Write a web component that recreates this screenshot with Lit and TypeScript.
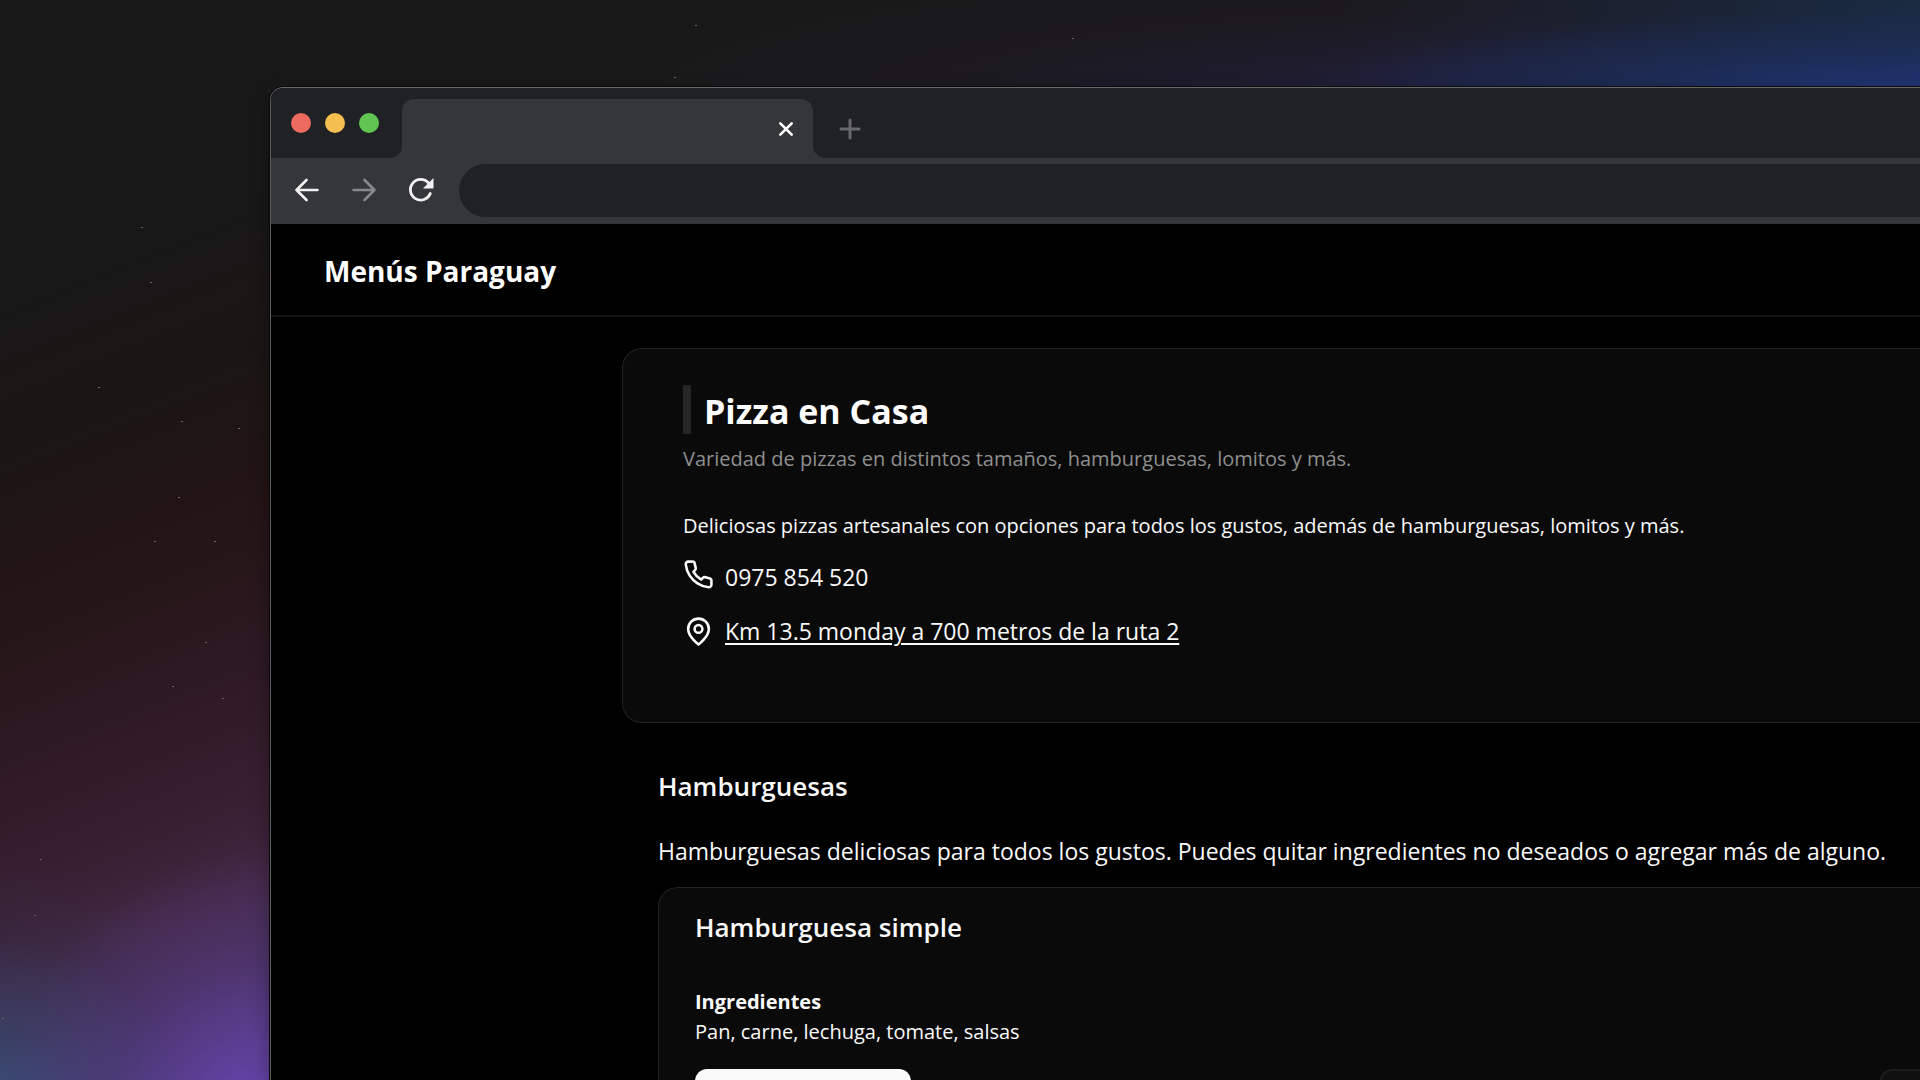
import { LitElement, html, css, svg } from "lit";
import { customElement } from "lit/decorators.js";

const STARS: [number, number][] = [
  [141, 227], [150, 282], [98, 387], [181, 421], [238, 428], [178, 497], [154, 541],
  [214, 541], [205, 642], [172, 686], [222, 698], [40, 859], [34, 915], [2, 1018],
  [695, 25], [1072, 38], [674, 77],
];

@customElement("browser-bar")
export class BrowserBar extends LitElement {
  static styles = css`
    :host { display: block; }
    button { display: grid; place-items: center; border: 0; padding: 0; background: none; color: inherit; }
    svg { display: block; fill: none; stroke: currentColor; }
    .strip { display: flex; align-items: flex-end; height: 70px; background: #202124; }
    .lights { display: flex; align-items: center; gap: 14px; height: 70px; padding: 0 23px 0 20px; }
    .light { width: 20px; height: 20px; border-radius: 50%; }
    .red { background: #ed6a5e; }
    .yellow { background: #f4bf4f; }
    .green { background: #61c554; }
    .tab {
      position: relative; display: flex; align-items: center; justify-content: flex-end;
      flex: 0 0 411px; box-sizing: border-box; height: 59px; padding-right: 15px;
      border-radius: 12px 12px 0 0; background: #35363a; color: #fff;
    }
    .tab::before, .tab::after { content: ""; position: absolute; bottom: 0; width: 12px; height: 12px; }
    .tab::before { right: 100%; background: radial-gradient(circle at 0 0, transparent 12px, #35363a 12px); }
    .tab::after { left: 100%; background: radial-gradient(circle at 100% 0, transparent 12px, #35363a 12px); }
    .close { width: 24px; height: 24px; }
    .new { width: 40px; height: 59px; margin-left: 17px; color: #68696c; }
    .tools { display: flex; align-items: center; height: 66px; box-sizing: border-box; padding: 0 0 2px 20px; background: #35363a; color: #f1f1f1; }
    .nav { display: flex; gap: 25px; padding-right: 22px; }
    .nav button { width: 32px; height: 32px; }
    .forward { color: #87888b; }
    .address {
      flex: 1; min-width: 0; height: 53px; box-sizing: border-box; padding: 0 28px; border: 0;
      border-radius: 27px 0 0 27px; background: #202124; color: #fff; font: 20px "Open Sans", sans-serif;
    }
  `;

  render() {
    return html`
      <div class="strip">
        <div class="lights">
          <span class="light red"></span><span class="light yellow"></span><span class="light green"></span>
        </div>
        <div class="tab">
          <button class="close" aria-label="Cerrar">
            <svg width="16" height="16" viewBox="0 0 16 16" stroke-width="2.6" stroke-linecap="round"><path d="M2.300 2.300l11.400 11.400M13.700 2.300L2.300 13.700" /></svg>
          </button>
        </div>
        <button class="new" aria-label="Nueva">
          <svg width="22" height="22" viewBox="0 0 22 22" stroke-width="3" stroke-linecap="round"><path d="M11 2v18M2 11h18" /></svg>
        </button>
      </div>
      <div class="tools">
        <div class="nav">
          <button aria-label="Atrás">
            <svg width="24" height="24" viewBox="0 0 24 24" stroke-width="2.600" stroke-linecap="round" stroke-linejoin="round"><path d="M22.500 12H1.500M11.500 2L1.500 12L11.500 22" /></svg>
          </button>
          <button class="forward" aria-label="Adelante">
            <svg width="24" height="24" viewBox="0 0 24 24" stroke-width="2.600" stroke-linecap="round" stroke-linejoin="round"><path d="M1.500 12H22.500M12.500 2L22.500 12L12.500 22" /></svg>
          </button>
          <button aria-label="Recargar">
            <svg width="26" height="26" viewBox="0 0 26 26" stroke-width="2.800" stroke-linecap="round">
              <path d="M22.300 16.500A10.300 10.300 0 1 1 20.500 6" /><path d="M25.500 1v10.500H15z" fill="currentColor" stroke="none" />
            </svg>
          </button>
        </div>
        <input class="address" aria-label="Dirección" />
      </div>
    `;
  }
}

@customElement("app-root")
export class AppRoot extends LitElement {
  static styles = css`
    :host {
      display: block; position: relative; box-sizing: border-box; height: 100vh; overflow: hidden;
      padding: 87px 0 0 270px; color: #fafafa; font-family: "Open Sans", "Noto Sans", sans-serif;
      background:
        radial-gradient(ellipse 270px 290px at 265px 1140px, #6c48b8 0%, #6444aae0 25%, #573a8a80 60%, transparent 100%),
        radial-gradient(ellipse 300px 300px at -20px 1160px, #385888 0%, #34487099 45%, #30305040 75%, transparent 100%),
        radial-gradient(ellipse 620px 80px at 1920px 90px, #1f3474 0%, #1e306699 45%, transparent 100%),
        radial-gradient(ellipse 640px 300px at 1980px 0px, #1a2d46 0%, #1a284099 50%, transparent 100%),
        radial-gradient(ellipse 900px 140px at 1500px 100px, #211f3c 0%, #1f1a2880 60%, transparent 100%),
        linear-gradient(158deg, #191919 0%, #181818 24%, #1b1615 38%, #221414 48%, #27161a 56%, #311b28 68%, #3a2135 77%, #432944 83%, #463052 92%) 0 0 / 280px 100% no-repeat,
        #191919;
    }
    .stars { position: absolute; inset: 0; width: 100%; height: 100%; fill: #6a6465; }
    .window {
      position: relative; display: flex; flex-direction: column; box-sizing: border-box; height: 100%;
      border: 1px solid #5b5c5e; border-width: 1px 0 0 1px; border-top-color: #68696b; border-radius: 13px 0 0 0; overflow: hidden; background: #000;
      box-shadow: 0 0 0 1px #0a0a0a, 0 8px 20px #00000059;
    }
    .site { flex: 1; min-height: 0; overflow: hidden; }
    header { display: flex; align-items: center; box-sizing: border-box; height: 93px; padding: 3px 53px 0; border-bottom: 2px solid #141414; }
    h1, h2, h3, h4, p { margin: 0; }
    .brand { font-size: 28px; line-height: 40px; font-weight: 700; color: #fff; text-decoration: none; }
    main { padding: 31px 0 0 351px; }
    .place {
      box-sizing: border-box; height: 375px; padding: 36px 60px; border: 1px solid #222; border-right: 0;
      border-radius: 20px 0 0 20px; background: #0a0a0a;
    }
    .place h1 { padding: 3px 0 0 13px; border-left: 8px solid #262626; font-size: 34px; line-height: 46px; font-weight: 700; color: #fff; }
    .tagline { padding-top: 10px; font-size: 20px; line-height: 30px; color: #8f8f8f; }
    .about { padding-top: 37px; font-size: 20px; line-height: 30px; }
    .contact { display: flex; align-items: center; gap: 11px; padding-top: 18px; font-size: 23px; line-height: 36px; }
    .phone { align-items: flex-start; }
    .contact a { color: inherit; text-underline-offset: 3px; text-decoration-thickness: 2px; }
    .contact .plain { text-decoration: none; }
    .contact svg { display: block; fill: none; stroke: currentColor; stroke-width: 2; stroke-linecap: round; stroke-linejoin: round; }
    .group { padding: 44px 0 0 36px; }
    .group h2 { font-size: 26px; line-height: 38px; font-weight: 600; }
    .intro { padding-top: 28px; font-size: 23px; line-height: 36px; white-space: nowrap; }
    .dish { margin-top: 18px; padding: 20px 0 40px 36px; border: 1px solid #222; border-right: 0; border-radius: 20px 0 0 0; background: #0a0a0a; }
    .dish h3 { font-size: 26px; line-height: 38px; font-weight: 600; }
    .dish h4 { padding-top: 41px; font-size: 20px; line-height: 30px; font-weight: 700; }
    .dish p { font-size: 20px; line-height: 30px; }
    .actions { display: flex; justify-content: space-between; padding-top: 22px; }
    .actions button { height: 60px; box-sizing: border-box; border: 0; border-radius: 12px; }
    .add { width: 216px; background: #fafafa; }
    .more { width: 60px; margin-right: -20px; background: #0f0f0f; box-shadow: inset 0 0 0 2px #1c1c1c; }
  `;

  render() {
    return html`
      <svg class="stars" aria-hidden="true">
        ${STARS.map(([x, y]) => svg`<rect x=${x} y=${y} width="2" height="1" />`)}
      </svg>
      <div class="window">
        <browser-bar></browser-bar>
        <div class="site">
          <header><a class="brand" href="#">Menús Paraguay</a></header>
          <main>
            <section class="place">
              <h1>Pizza en Casa</h1>
              <p class="tagline">Variedad de pizzas en distintos tamaños, hamburguesas, lomitos y más.</p>
              <p class="about">Deliciosas pizzas artesanales con opciones para todos los gustos, además de hamburguesas, lomitos y más.</p>
              <div class="contact phone">
                <svg width="31" height="31" viewBox="0 0 24 24"><path d="M22 16.920v3a2 2 0 0 1-2.180 2 19.790 19.790 0 0 1-8.630-3.070 19.500 19.500 0 0 1-6-6 19.790 19.790 0 0 1-3.070-8.670A2 2 0 0 1 4.110 2h3a2 2 0 0 1 2 1.720 12.840 12.840 0 0 0 .7 2.810 2 2 0 0 1-.45 2.110L8.090 9.910a16 16 0 0 0 6 6l1.270-1.270a2 2 0 0 1 2.110-.45 12.840 12.840 0 0 0 2.810.7A2 2 0 0 1 22 16.920z" /></svg>
                <a class="plain" href="tel:0975854520">0975 854 520</a>
              </div>
              <div class="contact">
                <svg width="31" height="31" viewBox="0 0 24 24"><path d="M20 10c0 6-8 12-8 12s-8-6-8-12a8 8 0 0 1 16 0Z" /><circle cx="12" cy="10" r="3" /></svg>
                <a href="#">Km 13.5 monday a 700 metros de la ruta 2</a>
              </div>
            </section>
            <section class="group">
              <h2>Hamburguesas</h2>
              <p class="intro">Hamburguesas deliciosas para todos los gustos. Puedes quitar ingredientes no deseados o agregar más de alguno.</p>
              <article class="dish">
                <h3>Hamburguesa simple</h3>
                <h4>Ingredientes</h4>
                <p>Pan, carne, lechuga, tomate, salsas</p>
                <div class="actions">
                  <button class="add" aria-label="Agregar"></button>
                  <button class="more" aria-label="Opciones"></button>
                </div>
              </article>
            </section>
          </main>
        </div>
      </div>
    `;
  }
}
